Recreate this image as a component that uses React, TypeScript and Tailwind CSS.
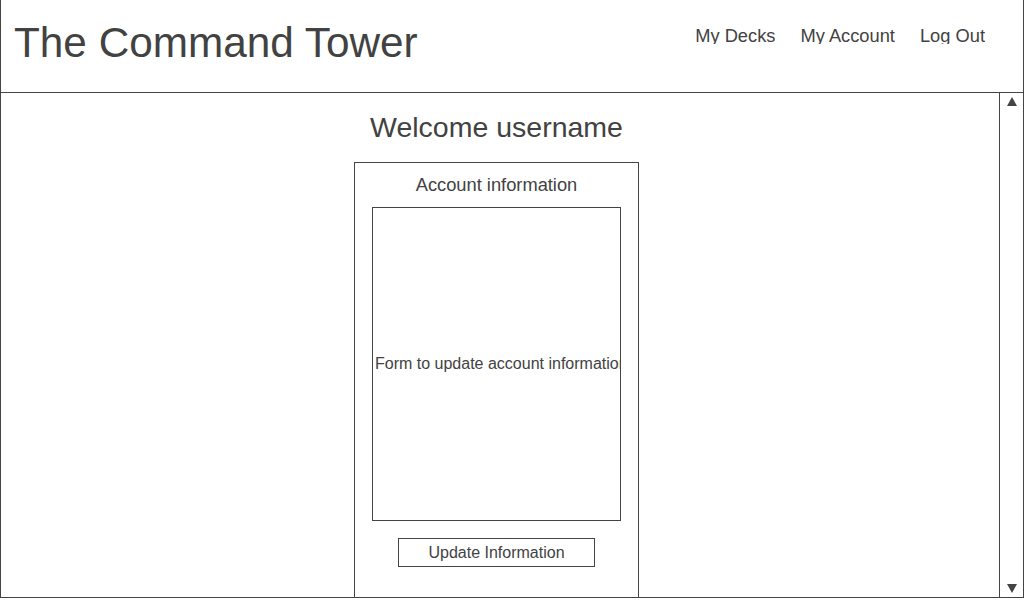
import React from 'react';

const NAV_LINKS = ['My Decks', 'My Account', 'Log Out'];

function ScrollArrow({ down = false }: { down?: boolean }) {
    return (
        <svg width="10" height="9" viewBox="0 0 10 9" className="block">
            <polygon points={down ? '0,0 10,0 5,9' : '5,0 10,9 0,9'} fill="#444444" />
        </svg>
    );
}

export default function App() {
    return (
        <div
            className="w-[1024px] h-[598px] flex flex-col overflow-hidden border-l border-r border-b border-[#444444] bg-white text-[#424242]"
            style={{ fontFamily: '"Liberation Sans", Arial, sans-serif' }}
        >
            {/* Header */}
            <header className="h-[93px] shrink-0 flex justify-between border-b border-[#444444]">
                <h1 className="pl-[13px] pt-[22px] text-[42.3px] leading-none font-normal">The Command Tower</h1>
                <nav className="flex gap-[25px] pr-[38px] pt-[27px]">
                    {NAV_LINKS.map((link) => (
                        <a key={link} className="block h-[17px] overflow-hidden text-[18.3px] leading-[18px] cursor-pointer">
                            {link}
                        </a>
                    ))}
                </nav>
            </header>

            {/* Body */}
            <div className="flex flex-1 min-h-0">
                <main className="flex-1 min-w-0 overflow-hidden flex flex-col items-center pr-[7px]">
                    <h2 className="mt-[20px] text-[28.5px] leading-[28px] font-normal">Welcome username</h2>

                    <section className="mt-[21px] w-[285px] h-[600px] shrink-0 border border-[#444444] flex flex-col items-center pt-[13px]">
                        <h3 className="text-[18.3px] leading-[18px] font-normal">Account information</h3>

                        <div className="mt-[13px] w-[249px] h-[314px] border border-[#444444] flex items-center overflow-hidden pl-[2px]">
                            <span className="whitespace-nowrap text-[16px]">Form to update account information</span>
                        </div>

                        <button className="mt-[17px] w-[197px] h-[29px] border border-[#444444] text-[16px] flex items-center justify-center">
                            Update Information
                        </button>
                    </section>
                </main>

                {/* Scrollbar */}
                <div className="w-[24px] shrink-0 border-l border-[#444444] flex flex-col items-center justify-between pt-[4px] pb-[4px]">
                    <ScrollArrow />
                    <ScrollArrow down />
                </div>
            </div>
        </div>
    );
}
